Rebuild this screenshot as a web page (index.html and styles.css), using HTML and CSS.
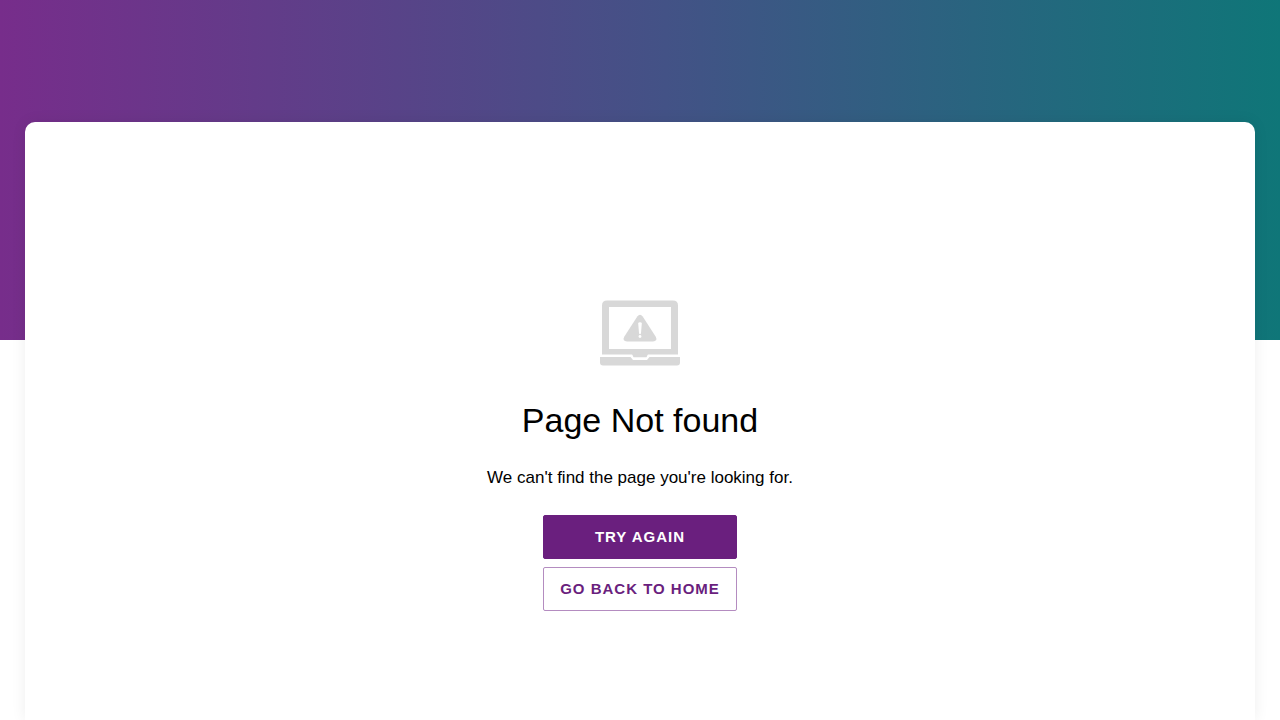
FILE: index.html
```html
<!DOCTYPE html>
<html lang="en">
<head>
<meta charset="utf-8">
<meta name="viewport" content="width=device-width, initial-scale=1">
<title>Page Not found</title>
<link rel="stylesheet" href="styles.css">
</head>
<body>
<main class="page">
  <section class="card">
    <svg class="icon" viewBox="0 0 80 66" aria-hidden="true">
      <path fill-rule="evenodd" d="M7 .5H73Q78 .5 78 5.500V54.500H2V5.500Q2 .5 7 .5ZM9 7V49H71V7Z"/>
      <path d="M0 57H30.500L33 60H47L49.500 57H80V62.500Q80 65.500 77 65.500H3Q0 65.500 0 62.500Z"/>
      <path d="M32 54H48L46.500 57.200H33.500Z"/>
      <path d="M37.300 16.500Q40 13 42.700 16.500L55.600 36.500Q58 41 53 41.500H27Q22 41 24.400 36.500Z"/>
      <path class="mark" d="M38.200 23.500Q38.200 22.300 40 22.300Q41.800 22.300 41.800 23.500L41 33Q40.800 34.300 40 34.300Q39.200 34.300 39 33Z"/>
      <circle class="mark" cx="40" cy="36.500" r="1.400"/>
    </svg>
    <h1 class="title">Page Not found</h1>
    <p class="message">We can't find the page you're looking for.</p>
    <div class="actions">
      <button class="button button-primary" type="button">TRY AGAIN</button>
      <button class="button button-outline" type="button">GO BACK TO HOME</button>
    </div>
  </section>
</main>
</body>
</html>
```
FILE: styles.css
```css
* {
  box-sizing: border-box;
}

body {
  margin: 0;
  background: #fff;
  color: #000;
  font-family: "Liberation Sans", Arial, sans-serif;
}

.page {
  display: flex;
  min-height: 100vh;
  padding: 122px 25px 0;
  background: linear-gradient(90deg, #772d8b, #435286 52%, #0f7678) top / 100% 340px no-repeat;
}

.card {
  display: flex;
  flex: 1;
  flex-direction: column;
  align-items: center;
  padding: 178px 24px 109px;
  border-radius: 10px 10px 0 0;
  background: #fff;
  box-shadow: 0 0 15px rgba(0, 0, 0, 0.07);
}

.icon {
  width: 80px;
  height: 66px;
  fill: #d8d8d8;
}

.mark {
  fill: #fff;
}

.title {
  margin: 34px 0 0;
  font-size: 34px;
  font-weight: 400;
  line-height: 40px;
}

.message {
  margin: 26px 0 0;
  font-size: 17px;
  line-height: 24px;
}

.actions {
  display: grid;
  gap: 8px;
  margin-top: 25px;
}

.button {
  height: 44px;
  padding: 0 16px 2px;
  border: 1px solid #b48cc0;
  border-radius: 2px;
  font-family: inherit;
  font-size: 15px;
  font-weight: 700;
  letter-spacing: 1px;
  cursor: pointer;
}

.button-primary {
  border-color: #6a1f7e;
  background: #6a1f7e;
  color: #fff;
}

.button-outline {
  background: #fff;
  color: #6a1f7e;
}
```
